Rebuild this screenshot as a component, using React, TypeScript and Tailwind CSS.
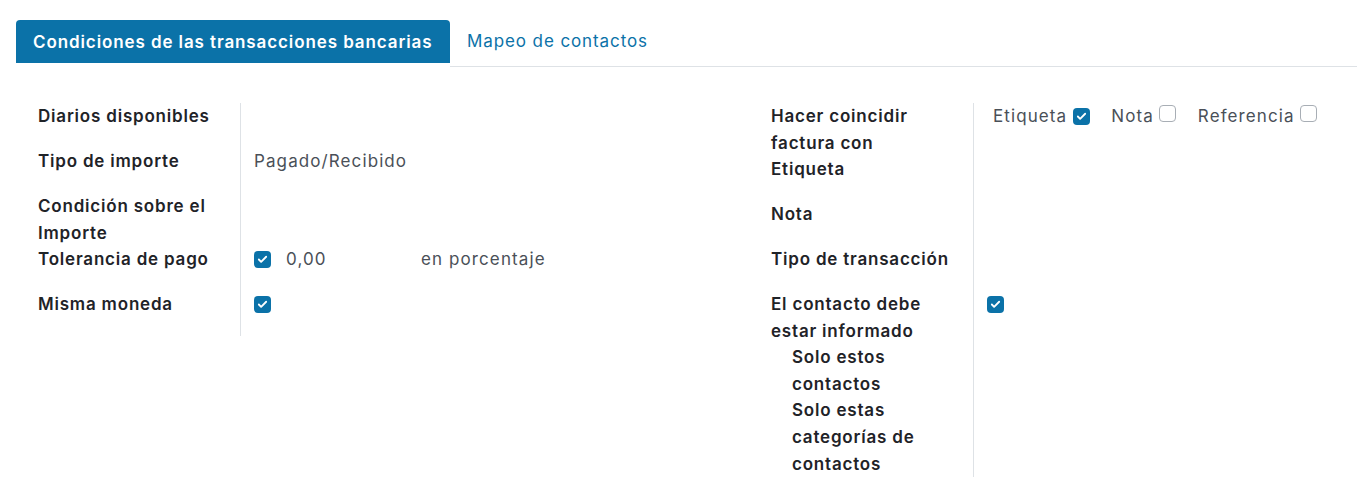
import { Check } from 'lucide-react';

const FONT = { fontFamily: 'Inter, "Noto Sans", sans-serif' };

function Box({ checked }: { checked?: boolean }) {
  return checked ? (
    <span className="inline-flex h-[17px] w-[17px] items-center justify-center rounded-[4px] bg-[#0b72a8]">
      <Check className="h-[11px] w-[11px] text-white" strokeWidth={4} />
    </span>
  ) : (
    <span className="inline-block h-[17px] w-[17px] rounded-[4px] border border-[#a8aeb5] bg-white" />
  );
}

function Row({
  label,
  children,
  minH = 'min-h-[45px]',
  indent = false,
}: {
  label: React.ReactNode;
  children?: React.ReactNode;
  minH?: string;
  indent?: boolean;
}) {
  return (
    <div className={`flex ${minH}`}>
      <div className={`w-[203px] shrink-0 border-r border-[#dee2e6] pr-2 font-semibold tracking-[0.8px] text-[#1f2328] ${indent ? 'pl-[21px]' : ''}`}>
        {label}
      </div>
      <div className="flex-1 pl-[13px] tracking-[1.1px] text-[#4a5058]">{children}</div>
    </div>
  );
}

export default function App() {
  return (
    <div className="min-h-[489px] bg-white text-[17px] leading-[26.6px]" style={FONT}>
      {/* Tabs */}
      <div className="flex items-start pl-[16px] pr-[2px] pt-[20px]">
        <div className="flex h-[43px] w-[434px] items-center rounded-t-[4px] bg-[#0b72a8] pl-[17px] pt-[1px] font-semibold tracking-[0.9px] text-white">
          Condiciones de las transacciones bancarias
        </div>
        <div className="flex h-[47px] flex-1 items-center border-b border-[#dee2e6] pb-[4px] pl-[17px] tracking-[0.9px] text-[#0b72a8]">
          Mapeo de contactos
        </div>
      </div>

      {/* Groups */}
      <div className="flex pt-[36px]">
        <div className="w-[771px] pl-[38px]">
          <Row label="Diarios disponibles" />
          <Row label="Tipo de importe">Pagado/Recibido</Row>
          <Row label={<>Condición sobre el<br />Importe</>} />
          <Row label="Tolerancia de pago">
            <div className="flex h-[26.6px] items-center">
              <Box checked />
              <span className="ml-[15px] w-[135px]">0,00</span>
              <span>en porcentaje</span>
            </div>
          </Row>
          <Row label="Misma moneda">
            <div className="flex h-[26.6px] items-center">
              <Box checked />
            </div>
          </Row>
        </div>

        <div className="w-[560px]">
          <Row label={<>Hacer coincidir<br />factura con<br />Etiqueta</>} minH="min-h-[98px]">
            <div className="flex h-[26.6px] items-center pl-[6px]">
              <span>Etiqueta</span>
              <span className="ml-[6px]"><Box checked /></span>
              <span className="ml-[21px]">Nota</span>
              <span className="ml-[5px]"><Box /></span>
              <span className="ml-[22px]">Referencia</span>
              <span className="ml-[5px]"><Box /></span>
            </div>
          </Row>
          <Row label="Nota" />
          <Row label="Tipo de transacción" />
          <Row label={<>El contacto debe<br />estar informado</>}>
            <div className="flex h-[26.6px] items-center">
              <Box checked />
            </div>
          </Row>
          <Row label={<>Solo estos<br />contactos</>} minH="" indent />
          <Row label={<>Solo estas<br />categorías de<br />contactos</>} minH="" indent />
        </div>
      </div>
    </div>
  );
}
